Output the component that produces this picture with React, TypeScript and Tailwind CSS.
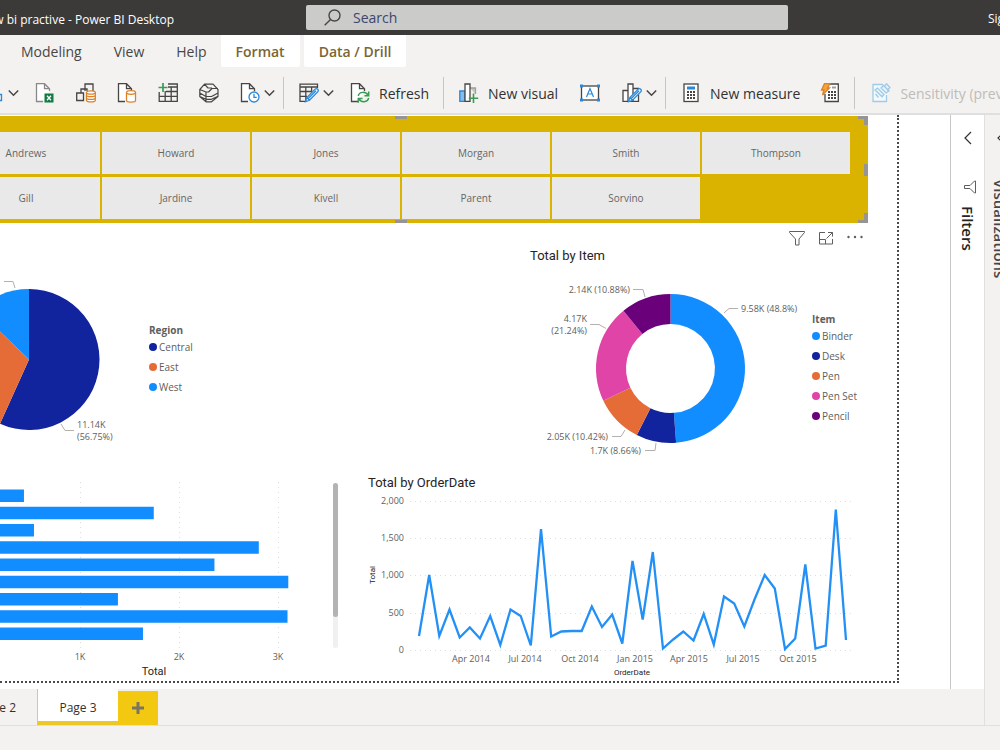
import type { ReactNode } from "react";

const BLUE = "#118dff";
const NAVY = "#12239e";
const ORANGE = "#e66c37";
const PINK = "#e044a7";
const PURPLE = "#6b007b";

const people = [
  ["Andrews", "Howard", "Jones", "Morgan", "Smith", "Thompson"],
  ["Gill", "Jardine", "Kivell", "Parent", "Sorvino"],
];

const itemSlices = [
  { name: "Binder", share: 48.8, color: BLUE },
  { name: "Desk", share: 8.66, color: NAVY },
  { name: "Pen", share: 10.42, color: ORANGE },
  { name: "Pen Set", share: 21.24, color: PINK },
  { name: "Pencil", share: 10.88, color: PURPLE },
];

const regionSlices = [
  { name: "Central", share: 56.75, color: NAVY },
  { name: "East", share: 30.45, color: ORANGE },
  { name: "West", share: 12.8, color: BLUE },
];

const barTotals = [434, 1745, 535, 2806, 2358, 3104, 1383, 3096, 1636];

const orderTotals = [
  194, 1012, 194, 550, 174, 308, 161, 462, 74, 550, 462, 67, 1628, 188, 255,
  261, 261, 590, 315, 483, 94, 1200, 416, 1320, 27, 147, 255, 134, 489, 80, 724,
  630, 322, 684, 1012, 831, 20, 161, 1153, 27, 67, 1890, 141,
];

const dateTicks = [
  { label: "Apr 2014", x: 103 },
  { label: "Jul 2014", x: 157 },
  { label: "Oct 2014", x: 212 },
  { label: "Jan 2015", x: 267 },
  { label: "Apr 2015", x: 321 },
  { label: "Jul 2015", x: 375 },
  { label: "Oct 2015", x: 430 },
];

type Slice = { name: string; share: number; color: string };

function slicePaths(slices: Slice[], cx: number, cy: number, r: number, inner: number) {
  let start = 0;
  return slices.map((slice) => {
    const end = start + (slice.share / 100) * Math.PI * 2;
    const point = (angle: number, radius: number) =>
      `${(cx + Math.sin(angle) * radius).toFixed(2)} ${(cy - Math.cos(angle) * radius).toFixed(2)}`;
    const large = end - start > Math.PI ? 1 : 0;
    const d = `M${point(start, r)}A${r} ${r} 0 ${large} 1 ${point(end, r)}L${point(end, inner)}A${inner} ${inner} 0 ${large} 0 ${point(start, inner)}Z`;
    start = end;
    return <path key={slice.name} d={d} fill={slice.color} />;
  });
}

function Icon({ children }: { children: ReactNode }) {
  return (
    <svg
      viewBox="0 0 20 20"
      className="h-5 w-5 shrink-0"
      fill="none"
      stroke="#484644"
      strokeWidth="1.3"
    >
      {children}
    </svg>
  );
}

function Chevron() {
  return (
    <svg viewBox="0 0 11 8" className="h-2 w-[11px] shrink-0" fill="none" stroke="#484644" strokeWidth="1.5">
      <path d="M.8 1.5 5.5 6.2 10.2 1.5" />
    </svg>
  );
}

const pagePath = "M8 18.5H1.5V.7H9.500L14.500 5.700V8M9.500.7V5.700H14.500";

function Cylinder() {
  return (
    <g stroke="#d9822b" fill="#fff">
      <path d="M9.500 9.500V17.500C9.500 19.600 18.500 19.600 18.500 17.500V9.500" />
      <ellipse cx="14" cy="9.500" rx="4.500" ry="1.800" />
    </g>
  );
}

function ToolButton({
  label,
  text,
  menu,
  children,
}: {
  label: string;
  text?: boolean;
  menu?: boolean;
  children: ReactNode;
}) {
  return (
    <button type="button" aria-label={label} className="flex shrink-0 items-center gap-1">
      <Icon>{children}</Icon>
      {text && <span className="pl-[5px] whitespace-nowrap">{label}</span>}
      {menu && <Chevron />}
    </button>
  );
}

function Pencil() {
  return (
    <path
      d="M6.500 18.800 7.800 14.500 16.300 6C18.200 5 20 6.800 18.900 8.700L10.500 17.300ZM7.800 14.500 10.500 17.300M9 15.800 17 7.800"
      stroke="#2b88d8"
      fill="#f3f9fd"
    />
  );
}

function TitleBar() {
  return (
    <header className="flex h-[35px] items-center bg-[#3b3a39] text-white">
      <div className="flex w-[174px] shrink-0 justify-end overflow-hidden pt-1 text-[12px] whitespace-nowrap">
        new bi practive - Power BI Desktop
      </div>
      <div className="mr-[200px] ml-[132px] flex h-[25px] flex-1 items-center gap-3 rounded-xs bg-[#cbcbc9] pl-[18px]">
        <svg viewBox="0 0 17 17" className="h-[17px] w-[17px]" fill="none" stroke="#484644" strokeWidth="1.4">
          <circle cx="10.500" cy="6.500" r="5.500" />
          <path d="M6.500 10.500.7 16.300" />
        </svg>
        <input
          type="text"
          aria-label="Search"
          placeholder="Search"
          className="min-w-0 flex-1 bg-transparent text-[14px] text-[#2b3a67] outline-none placeholder:text-[#3b4670]"
        />
      </div>
      <button type="button" className="w-3 shrink-0 overflow-hidden pt-[2px] text-left text-[12px] whitespace-nowrap">
        Sign in
      </button>
    </header>
  );
}

function RibbonTabs() {
  const plain = "flex items-center whitespace-nowrap";
  const active = "flex items-center rounded-b-xs bg-white px-[15px] font-semibold text-[#7a6535]";
  return (
    <nav className="flex h-8 pl-[21px] text-[14px] text-[#484644]">
      <div className="flex gap-8 pr-[14px]">
        <button type="button" className={plain}>Modeling</button>
        <button type="button" className={plain}>View</button>
        <button type="button" className={plain}>Help</button>
      </div>
      <div className="flex gap-1">
        <button type="button" className={active}>Format</button>
        <button type="button" className={active}>Data / Drill</button>
      </div>
    </nav>
  );
}

function Ribbon() {
  return (
    <div className="flex h-12 items-center overflow-hidden border-b-2 border-[#dfdfe0] pt-[6px] text-[14px] text-[#323130]">
      <div className="-ml-4 flex h-8 shrink-0 items-center gap-4 border-r border-[#c8c6c4] pr-2">
        <ToolButton label="Get data" menu>
          <path d="M11 9.500V17.500H17.500V11.500H11" stroke="#2b88d8" />
        </ToolButton>
        <div className="flex gap-[21px]">
          <ToolButton label="Excel workbook">
            <path d={pagePath} stroke="#8a8886" fill="#fff" />
            <rect x="9.500" y="10.500" width="9" height="9" fill="#107c41" stroke="none" />
            <path d="M12 12.800 16 17.300M16 12.800 12 17.300" stroke="#fff" />
          </ToolButton>
          <ToolButton label="Power BI datasets">
            <path d="M9 8V1H17V8M5 10V6H11V8M.7 10H7.500V17.500H.7Z" />
            <g stroke="#d9822b" fill="#fff">
              <path d="M10.500 9.500V17.300C10.500 19.500 19.300 19.500 19.300 17.300V9.500" />
              <ellipse cx="14.900" cy="9.500" rx="4.400" ry="1.700" />
              <path d="M10.500 12.200C10.500 14 19.300 14 19.300 12.200M10.500 15C10.500 16.800 19.300 16.800 19.300 15" />
            </g>
          </ToolButton>
          <ToolButton label="SQL Server">
            <path d={pagePath} fill="#fff" />
            <Cylinder />
          </ToolButton>
          <ToolButton label="Enter data">
            <path d="M10 1H19.300V18.300H1.200V9M10 4H19.300M8 8.500H19.300M1.200 13.300H19.300M7.200 8V18.300M13.200 4V18.300" />
            <path d="M5 0V9M.5 4.500H9.500" stroke="#3a9b52" strokeWidth="1.700" />
          </ToolButton>
          <ToolButton label="Dataverse">
            <path
              d="M.8 6.500 5.500 1.200H14L19 6.500V13.500L12.500 18.800H7L.8 13.500ZM.8 6.500 7 9H9.500L13 5.500H19M5.500 1.200 9 5H13M.8 10 7 13.500H12.500L19 10M.8 13.500 7 16.300H12.500L19 13.300M7 9V18.500"
              strokeWidth="1.2"
              strokeLinejoin="round"
            />
          </ToolButton>
          <ToolButton label="Recent sources" menu>
            <path d={pagePath} fill="#fff" />
            <circle cx="14" cy="14" r="5" stroke="#2b88d8" fill="#fff" />
            <path d="M14 10.800V14.300H16.700" stroke="#2b88d8" />
          </ToolButton>
        </div>
      </div>
      <div className="flex h-8 shrink-0 items-center gap-4 border-r border-[#c8c6c4] pr-[14px] pl-[15px]">
        <ToolButton label="Transform data" menu>
          <path d="M8 18.300H1V1.200H18.500V5M1 4H18.500M1 8.500H13M1 13.300H8M6.800 4V18.300M12.600 4V8" />
          <Pencil />
        </ToolButton>
        <ToolButton label="Refresh" text>
          <path d={pagePath} fill="#fff" />
          <path
            d="M8.300 13C9 8.500 16 8 18.200 12.500M18.700 8.500V12.700H14.500M18.700 15C17.500 19.500 11 20 8.700 15.600M8.300 19.700V15.400H12.500"
            stroke="#3a9b52"
            strokeWidth="1.500"
          />
        </ToolButton>
      </div>
      <div className="flex h-8 shrink-0 items-center gap-[22px] border-r border-[#c8c6c4] pr-2 pl-[15px]">
        <ToolButton label="New visual" text>
          <path d="M.8 8H6V18.300H.8Z" stroke="#2b88d8" fill="#83beec" />
          <path d="M11 5H16.500V11" stroke="#a19f9d" fill="#c8c6c4" />
          <path d="M6 1H11V18.300H6Z" fill="#fff" />
          <path d="M14.500 10.500V20M9.800 15.300H19.200" stroke="#3a9b52" strokeWidth="1.600" />
        </ToolButton>
        <ToolButton label="Text box">
          <rect x="1.500" y="3" width="17" height="14" fill="#fff" />
          <path d="M6.500 14 10 5.500 13.500 14M7.700 11H12.300" stroke="#2b88d8" strokeWidth="1.200" />
          <path
            d="M0 1.500H3V4.500H0ZM17 1.500H20V4.500H17ZM0 15.500H3V18.500H0ZM17 15.500H20V18.500H17Z"
            fill="#2b88d8"
            stroke="none"
          />
        </ToolButton>
        <ToolButton label="More visuals" menu>
          <path d="M1 7.500H6V18.300H1ZM6 1H11V18.300H6ZM11 5.500H16.500V18.300H11Z" fill="#fff" />
          <Pencil />
        </ToolButton>
      </div>
      <div className="flex h-8 shrink-0 items-center gap-5 border-r border-[#c8c6c4] pr-[14px] pl-[15px]">
        <ToolButton label="New measure" text>
          <rect x="3" y="1" width="14" height="17.500" fill="#fff" />
          <rect x="6" y="3.500" width="8" height="3" fill="#2b88d8" stroke="none" />
          <path d="M6 9H14M6 12H14M6 15H14" strokeWidth="2" strokeDasharray="2 1" />
        </ToolButton>
        <ToolButton label="Quick measure">
          <path d="M9 1H18.300V18.500H5V11" fill="#fff" />
          <path d="M12 4.500H16" stroke="#a19f9d" strokeWidth="2" />
          <path d="M8 9H16M8 12H16M8 15H16" strokeWidth="2" strokeDasharray="2 1" />
          <path d="M4.500.5H10L7.500 5H9.500L2.500 12 4 7H1.500Z" fill="#f7a23b" stroke="#d9822b" />
        </ToolButton>
      </div>
      <button type="button" disabled className="flex items-center gap-[9px] pl-4 text-[#bebbb8]">
        <Icon>
          <g stroke="#9fcbe6" fill="#e5f2fa">
            <path d="M12 1.500H2V18.500H15.500V12" fill="#f3f9fd" />
            <path d="M4 7 6.500 5 13 11.500 11 13.800ZM7.500 14.500 4.500 11M10 5 15 10 18 8 12.500 2.500ZM13 4 15.500.7 19 4.500 16 7.500" />
          </g>
        </Icon>
        <span className="whitespace-nowrap">Sensitivity (preview)</span>
      </button>
    </div>
  );
}

function Slicer() {
  const handle = "absolute bg-[#979593]";
  return (
    <section className="relative mr-[29px] rounded-r-md bg-[#d9b300] pt-4 pr-[18px] pb-1">
      <div className="-ml-12 grid grid-cols-6 gap-x-[2px] gap-y-[3px]">
        {people.flat().map((name) => (
          <button
            key={name}
            type="button"
            className="h-[42px] bg-[#e9e9e9] text-[10px] text-[#666]"
          >
            {name}
          </button>
        ))}
      </div>
      <span className={`${handle} top-0 left-[395px] h-[3px] w-3`} />
      <span className={`${handle} bottom-0 left-[395px] h-[3px] w-3`} />
      <span className={`${handle} top-0 right-0 h-[3px] w-[10px]`} />
      <span className={`${handle} top-0 right-0 h-[9px] w-1`} />
      <span className={`${handle} top-12 right-0 h-3 w-1`} />
      <span className={`${handle} right-0 bottom-0 h-[3px] w-[10px]`} />
      <span className={`${handle} right-0 bottom-0 h-[10px] w-1`} />
    </section>
  );
}

function Legend({ title, slices }: { title: string; slices: Slice[] }) {
  return (
    <div className="shrink-0 text-[10px] text-[#605e5c]">
      <div className="h-[14px] leading-[14px] font-bold">{title}</div>
      <ul>
        {slices.map((slice) => (
          <li key={slice.name} className="flex h-5 items-center gap-[2px] whitespace-nowrap">
            <svg viewBox="0 0 8 8" className="h-2 w-2">
              <circle cx="4" cy="4" r="4" fill={slice.color} />
            </svg>
            {slice.name}
          </li>
        ))}
      </ul>
    </div>
  );
}

function RegionPie() {
  return (
    <section className="flex items-start pt-[52px]">
      <svg viewBox="0 0 140 180" width="140" height="180" className="text-[9px]" fill="#605e5c">
        {slicePaths(regionSlices, 29, 84.5, 70.5, 0)}
        <g fill="none" stroke="#b3b0ad">
          <path d="M4 6.500H13L15 13" />
          <path d="M61 149 65 155.500H74" />
        </g>
        <text x="77" y="153">11.14K</text>
        <text x="77" y="165">(56.75%)</text>
      </svg>
      <div className="pt-12 pl-[9px]">
        <Legend title="Region" slices={regionSlices} />
      </div>
    </section>
  );
}

function ItemDonut() {
  return (
    <section className="mr-[29px] w-[338px] pt-[5px]">
      <div className="flex h-5 items-center justify-end gap-[13px] pr-[5px]">
        <button type="button" aria-label="Filters on this visual">
          <svg viewBox="0 0 16 16" className="h-4 w-4" fill="none" stroke="#605e5c">
            <path d="M.5 1.500H15.500V2.500L10 9V15H6.500V9L.5 2.500Z" />
          </svg>
        </button>
        <button type="button" aria-label="Focus mode">
          <svg viewBox="0 0 16 16" className="h-4 w-4" fill="none" stroke="#605e5c">
            <path d="M7 2.500H1.500V14H14.500V9M1.500 9.500H7.500V14M10 2.500H14.500V6.500M14.500 2.500 8.500 8.500" />
          </svg>
        </button>
        <button type="button" aria-label="More options">
          <svg viewBox="0 0 16 16" className="h-4 w-4" fill="#605e5c">
            <circle cx="1.500" cy="7" r="1.200" />
            <circle cx="8" cy="7" r="1.200" />
            <circle cx="14.500" cy="7" r="1.200" />
          </svg>
        </button>
      </div>
      <h2 className="font-['Roboto',sans-serif] text-[13px] leading-4 text-[#252423]">Total by Item</h2>
      <div className="flex items-start pt-4 pl-[10px]">
        <svg viewBox="0 0 272 180" width="272" height="180" className="shrink-0 text-[9px]" fill="#605e5c">
          {slicePaths(itemSlices, 130.5, 88.5, 74.5, 44.5)}
          <g fill="none" stroke="#b3b0ad">
            <path d="M93 9.500H103L105 17" />
            <path d="M50 44.500H59L66 48.500" />
            <path d="M184 33 189 28.500H198" />
            <path d="M72 156.500H81L85 150" />
            <path d="M105 170.500H115L116 163" />
          </g>
          <g textAnchor="end">
            <text x="90" y="13">2.14K (10.88%)</text>
            <text x="47" y="42">4.17K</text>
            <text x="47" y="54">(21.24%)</text>
            <text x="68" y="160">2.05K (10.42%)</text>
            <text x="101" y="174">1.7K (8.66%)</text>
          </g>
          <text x="201" y="32">9.58K (48.8%)</text>
        </svg>
        <div className="pt-8">
          <Legend title="Item" slices={itemSlices} />
        </div>
      </div>
    </section>
  );
}

function TotalBars() {
  return (
    <section className="flex shrink-0 pt-1">
      <svg viewBox="0 0 333 200" width="333" height="200" textAnchor="middle" fill="#605e5c">
        <g stroke="#dedede" strokeDasharray="1 4">
          <path d="M80.500 3V169M179.500 3V169M278.500 3V169" />
        </g>
        {barTotals.map((total, i) => (
          <rect key={i} x="-19" y={10.5 + i * 17.25} width={total * 0.099} height="12.500" fill={BLUE} />
        ))}
        <g className="text-[9px]">
          <text x="80" y="181">1K</text>
          <text x="179" y="181">2K</text>
          <text x="278" y="181">3K</text>
        </g>
        <text x="154" y="196" className="font-['Roboto',sans-serif] text-[11px]" fill="#252423">
          Total
        </text>
      </svg>
      <div className="mt-1 h-[165px] w-[5px] rounded-full bg-[#f0f0f0]">
        <div className="h-[134px] rounded-full bg-[#b3b3b3]" />
      </div>
    </section>
  );
}

function OrderDateLine() {
  const points = orderTotals
    .map((total, i) => `${(51 + i * 10.167).toFixed(1)},${(159.5 - total * 0.0746).toFixed(1)}`)
    .join(" ");
  return (
    <section className="mr-[29px] min-w-0 flex-1 pl-[30px]">
      <h2 className="font-['Roboto',sans-serif] text-[13px] leading-4 text-[#252423]">Total by OrderDate</h2>
      <svg viewBox="0 0 500 188" className="block h-auto w-full text-[9px]" fill="#605e5c">
        {[0, 500, 1000, 1500, 2000].map((tick) => (
          <g key={tick}>
            <path
              d={`M42 ${Math.round(159 - tick * 0.0746) + 0.5}H484`}
              stroke="#dedede"
              strokeDasharray="1 4"
            />
            <text x="36" y={Math.round(162 - tick * 0.0746)} textAnchor="end">
              {tick.toLocaleString("en-US")}
            </text>
          </g>
        ))}
        <polyline points={points} fill="none" stroke="#2390f5" strokeWidth="2.300" strokeLinejoin="miter" />
        <g textAnchor="middle">
          {dateTicks.map((tick) => (
            <text key={tick.label} x={tick.x} y="171">
              {tick.label}
            </text>
          ))}
          <g className="font-['Roboto',sans-serif] text-[8px]" fill="#252423">
            <text x="264" y="184">OrderDate</text>
            <text transform="translate(7 84) rotate(-90)">Total</text>
          </g>
        </g>
      </svg>
    </section>
  );
}

function FiltersPane() {
  return (
    <aside className="flex w-[34px] shrink-0 flex-col items-center border-l border-[#c8c6c4] bg-white pt-4">
      <button type="button" aria-label="Expand filters">
        <svg viewBox="0 0 8 14" className="block h-[14px] w-2" fill="none" stroke="#323130" strokeWidth="1.200">
          <path d="M7 1 1 7 7 13" />
        </svg>
      </button>
      <svg viewBox="0 0 14 14" className="mt-[35px] ml-1 h-[14px] w-[14px]" fill="none" stroke="#605e5c">
        <path d="M12.500 1V13H11.500L7 8.500H1.500V5.500H7L11.500 1Z" />
      </svg>
      <h2 className="pt-3 text-[15px] leading-5 font-semibold text-[#252423] [writing-mode:vertical-rl]">
        Filters
      </h2>
    </aside>
  );
}

function PageTabs() {
  return (
    <nav className="flex h-9 text-[12px] text-[#323130]">
      <button type="button" className="flex w-[37px] justify-end overflow-hidden pt-[10px] pr-[21px] whitespace-nowrap">
        Page 2
      </button>
      <button
        type="button"
        className="flex w-[81px] justify-center border-b-4 border-l border-b-[#ecc825] border-l-[#c8c6c4] bg-white pt-[10px]"
      >
        Page 3
      </button>
      <button type="button" aria-label="New page" className="mt-[2px] flex w-10 items-center justify-center bg-[#f2c811]">
        <svg viewBox="0 0 12 12" className="h-3 w-3" stroke="#7a7462" strokeWidth="3">
          <path d="M6 0V12M0 6H12" />
        </svg>
      </button>
    </nav>
  );
}

export default function App() {
  return (
    <div className="flex min-h-screen flex-col overflow-hidden bg-[#f3f2f1] font-['Open_Sans','Noto_Sans',sans-serif]">
      <TitleBar />
      <RibbonTabs />
      <Ribbon />
      <div className="flex flex-1">
        <div className="flex min-w-0 flex-1 flex-col">
          <div className="flex flex-1 bg-white">
            <main className="min-w-0 flex-1 pr-[51px] pb-[6px]">
              <div className="border-r-2 border-b-2 border-dotted border-[#4a4a4a] pt-px">
                <Slicer />
                <div className="flex h-[252px] justify-between">
                  <RegionPie />
                  <ItemDonut />
                </div>
                <div className="flex pb-[2px]">
                  <TotalBars />
                  <OrderDateLine />
                </div>
              </div>
            </main>
            <FiltersPane />
          </div>
          <PageTabs />
        </div>
        <aside className="w-4 shrink-0 overflow-hidden border-l border-[#e1dfdd] pt-4">
          <button type="button" aria-label="Expand visualizations" className="block pl-3">
            <svg viewBox="0 0 8 14" className="block h-[14px] w-2" fill="none" stroke="#323130" strokeWidth="1.200">
              <path d="M7 1 1 7 7 13" />
            </svg>
          </button>
          <h2 className="pt-[34px] pl-[5px] text-[15px] leading-5 font-semibold text-[#484644] [writing-mode:vertical-rl]">
            Visualizations
          </h2>
        </aside>
      </div>
      <footer className="h-[25px] border-t border-[#e1dfdd]" />
    </div>
  );
}
